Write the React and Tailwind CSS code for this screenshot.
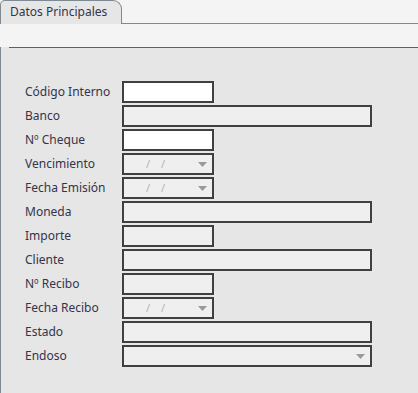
const rows = [
  { label: 'Código Interno', w: 'w-[92px]', bg: 'bg-white' },
  { label: 'Banco', w: 'w-[250px]', bg: 'bg-[#efefef]' },
  { label: 'Nº Cheque', w: 'w-[92px]', bg: 'bg-white' },
  { label: 'Vencimiento', w: 'w-[92px]', bg: 'bg-[#efefef]', date: true },
  { label: 'Fecha Emisión', w: 'w-[92px]', bg: 'bg-[#efefef]', date: true },
  { label: 'Moneda', w: 'w-[250px]', bg: 'bg-[#efefef]' },
  { label: 'Importe', w: 'w-[92px]', bg: 'bg-[#efefef]' },
  { label: 'Cliente', w: 'w-[250px]', bg: 'bg-[#efefef]' },
  { label: 'Nº Recibo', w: 'w-[92px]', bg: 'bg-[#efefef]' },
  { label: 'Fecha Recibo', w: 'w-[92px]', bg: 'bg-[#efefef]', date: true },
  { label: 'Estado', w: 'w-[250px]', bg: 'bg-[#efefef]' },
  { label: 'Endoso', w: 'w-[250px]', bg: 'bg-[#efefef]', select: true },
];

function Caret() {
  return (
    <svg width="9" height="5" viewBox="0 0 9 5" className="shrink-0">
      <path d="M0 0 H9 L4.5 5 Z" fill="#9a9a9a" />
    </svg>
  );
}

export default function App() {
  return (
    <div className="w-[418px] h-[393px] bg-[#f4f4f4] font-['Noto_Sans',sans-serif] text-[12px] text-[#34344a] overflow-hidden">
      {/* tab strip */}
      <div className="flex h-[24px]">
        <div className="w-[122px] h-[24px] bg-[#e6e6e6] border-l border-t border-r border-[#7d8a94] rounded-tl-[5px] rounded-tr-[9px] pl-[9px] pt-[3px] leading-[16px]">
          Datos Principales
        </div>
        <div className="flex-1 h-[24px] border-b border-[#7d8a94]" />
      </div>

      {/* panel */}
      <div className="h-[369px] bg-[#e6e6e6] border-l border-[#7d8a94]">
        <div className="ml-[8px] mt-[23px] h-px bg-[#2e6aa5]" />
        <div className="mt-[33px] pl-[24px] flex flex-col gap-[2px]">
          {rows.map((r) => (
            <div key={r.label} className="flex items-center h-[22px]">
              <div className="w-[97px] leading-[16px]">{r.label}</div>
              <div className={`${r.w} ${r.bg} h-[22px] border-2 border-[#404040] flex items-center`}>
                {r.date && (
                  <>
                    <span className="ml-[22px] text-[11px] text-[#b8b0c0] tracking-[4px]">/ /</span>
                    <span className="ml-auto mr-[5px]"><Caret /></span>
                  </>
                )}
                {r.select && (
                  <span className="ml-auto mr-[5px]"><Caret /></span>
                )}
              </div>
            </div>
          ))}
        </div>
      </div>
    </div>
  );
}
